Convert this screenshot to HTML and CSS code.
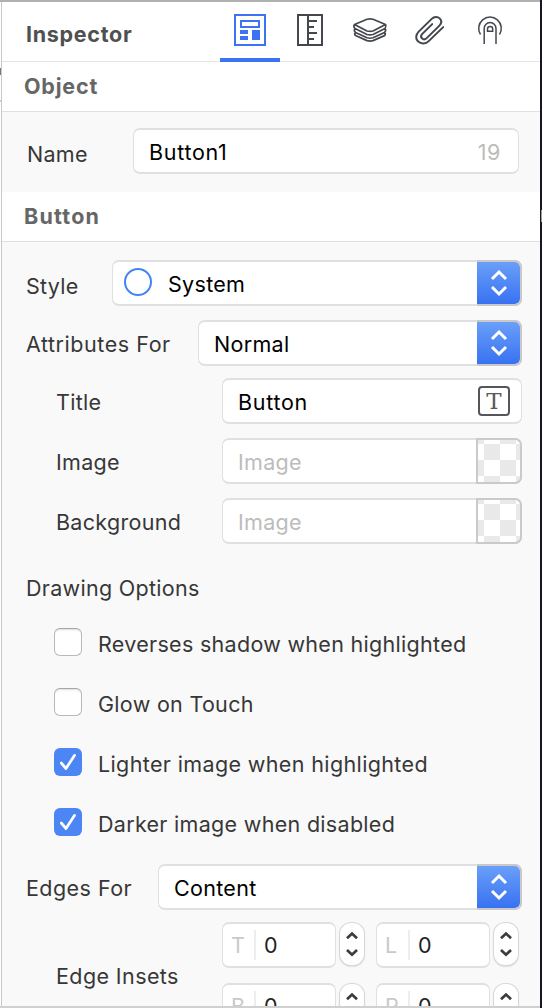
FILE: index.html
```html
<!DOCTYPE html>
<html lang="en">
<head>
<meta charset="utf-8">
<title>Inspector</title>
<link rel="stylesheet" href="styles.css">
</head>
<body>
<svg class="defs" width="0" height="0" aria-hidden="true">
  <symbol id="updown" viewBox="0 0 20 28"><path d="M3 10 10 3l7 7M3 18l7 7 7-7" fill="none" stroke="currentColor" stroke-width="3"/></symbol>
  <symbol id="step" viewBox="0 0 24 42"><path d="M7 15.200l5-4.700 5 4.700M7 27l5 4.700 5-4.700" fill="none" stroke="currentColor" stroke-width="2.700"/></symbol>
  <symbol id="check" viewBox="0 0 28 28"><path d="M7.300 15 12 20.500 20.600 7.300" fill="none" stroke="#fff" stroke-width="2.700" stroke-linecap="round" stroke-linejoin="round"/></symbol>
</svg>
<div class="panel">
  <header class="head">
    <h1 class="title"><span>Inspector</span></h1>
    <nav class="tabs">
      <div class="tab active"><svg width="60" height="60" viewBox="0 0 60 60" fill="none" stroke="#3d73f2" stroke-width="2"><path d="M15 13h30v30H15zM21 19h18v6H21z"/><path fill="#3d73f2" stroke="none" d="M20 28h8v4h-8zM20 34h8v4h-8zM32 28h8v10h-8z"/></svg></div>
      <div class="tab"><svg width="60" height="60" viewBox="0 0 60 60" fill="none" stroke="#45474f" stroke-width="2"><path d="M18 13h24v30H18zM28 13v30M28 19h9M28 25h6M28 31h9M28 37h6"/></svg></div>
      <div class="tab"><svg width="60" height="60" viewBox="0 0 60 60" fill="none" stroke="#45474f" stroke-width="1.700" stroke-linejoin="round"><path d="M14.500 22.500 27 17.200q3-.8 6 0l12.500 5.300-12.500 6.500q-3 .9-6 0zM14.500 22.500q-1.500 2.500.5 4L27 32.500q3 .9 6 0l12-6q1.500-2 .5-4M15 26.500q-1.500 2.500.5 4L27 35.800q3 .9 6 0l11.500-5.300q2-2 .5-4M15.500 30.500q-1.500 1.500 0 3L27 38.600q3 .9 6 0l11.500-5q1.500-1.500 0-3"/></svg></div>
      <div class="tab"><svg width="60" height="60" viewBox="0 0 60 60" fill="none" stroke="#45474f" stroke-width="2" stroke-linecap="round"><path transform="translate(-.8 -.4)" d="M44 25.500 29.500 39.500c-3 3-7.500 3.200-10.500.5s-2.500-7 .5-10L32.500 17.300c2.500-2.500 6-2.500 8-.5s2 5-.5 7.500L27.500 36.500c-1.500 1.500-3.500 1.500-4.700.3s-1.200-3 .3-4.500L33 22.500"/></svg></div>
      <div class="tab"><svg width="60" height="60" viewBox="0 0 60 60" fill="none" stroke="#45474f" stroke-width="1.500"><path d="M20.500 32.500a11.300 11.300 0 1 1 19 0M24.200 42V26.500a5.900 5.900 0 0 1 11.800 0V42"/><path d="M27.500 29.300v-2.300a2.600 2.600 0 0 1 5.200 0v2.300z"/></svg></div>
    </nav>
  </header>
  <h2 class="section"><span class="t-object">Object</span></h2>
  <div class="group object">
    <div class="row name"><label class="w-name">Name</label><div class="field"><span class="wide">Button1</span><span class="count">19</span></div></div>
  </div>
  <h2 class="section"><span class="t-button">Button</span></h2>
  <div class="group button">
    <div class="row gap14"><label class="w-style">Style</label><div class="field select"><i class="ring"></i><span>System</span><b class="arrows"><svg width="20" height="28"><use href="#updown"/></svg></b></div></div>
    <div class="row gap12 up"><label class="w-attr">Attributes For</label><div class="field select"><span>Normal</span><b class="arrows"><svg width="20" height="28"><use href="#updown"/></svg></b></div></div>
    <div class="row gap14 sub up"><label class="w-sub">Title</label><div class="field"><span class="wide">Button</span><b class="tbox">T</b></div></div>
    <div class="row gap14 sub up"><label class="w-sub">Image</label><div class="field muted"><span>Image</span><b class="swatch"></b></div></div>
    <div class="row sub up"><label class="w-sub">Background</label><div class="field muted"><span>Image</span><b class="swatch"></b></div></div>
    <div class="caption"><span>Drawing Options</span></div>
    <div class="option"><i class="box"></i><span>Reverses shadow when highlighted</span></div>
    <div class="option"><i class="box"></i><span>Glow on Touch</span></div>
    <div class="option"><i class="box on"><svg width="28" height="28"><use href="#check"/></svg></i><span class="lighter">Lighter image when highlighted</span></div>
    <div class="option"><i class="box on"><svg width="28" height="28"><use href="#check"/></svg></i><span>Darker image when disabled</span></div>
    <div class="row gap12 edges up"><label class="w-edges">Edges For</label><div class="field select"><span>Content</span><b class="arrows"><svg width="20" height="28"><use href="#updown"/></svg></b></div></div>
    <div class="insets">
      <label class="w-insets">Edge Insets</label>
      <div class="grid">
        <div class="pair"><div class="num"><em>T</em><span>0</span></div><div class="stepper"><svg width="24" height="42"><use href="#step"/></svg></div></div>
        <div class="pair"><div class="num"><em>L</em><span>0</span></div><div class="stepper"><svg width="24" height="42"><use href="#step"/></svg></div></div>
        <div class="pair"><div class="num"><em>B</em><span>0</span></div><div class="stepper"><svg width="24" height="42"><use href="#step"/></svg></div></div>
        <div class="pair"><div class="num"><em>R</em><span>0</span></div><div class="stepper"><svg width="24" height="42"><use href="#step"/></svg></div></div>
      </div>
    </div>
  </div>
</div>
</body>
</html>
```
FILE: styles.css
```css
* { box-sizing: border-box; }
body { margin: 0; width: 542px; height: 1008px; overflow: hidden; background: linear-gradient(#a0a0a6, #a0a0a6) 541px 210px / 1px 12px no-repeat, #16171f; font-family: Inter, "Liberation Sans", sans-serif; font-size: 21.5px; letter-spacing: .3px; color: #373737; }
.defs { position: absolute; }
svg { display: block; }
i, em { font-style: normal; }
b { font-weight: 400; }
.panel { width: 540px; height: 1008px; overflow: hidden; background: linear-gradient(#777, #777) 0 66px / 1px 7px no-repeat, linear-gradient(#ccc, #ccc) 0 98px / 1px 2px no-repeat, linear-gradient(90deg, #fff 1px, #c8c8c8 1px, #c8c8c8 2px, #f9f9f9 2px); border-top: 2px solid #b0b0b0; border-bottom: 2px solid #d0d0d0; padding-left: 2px; display: flex; flex-direction: column; }
.head { height: 60px; flex: none; background: #fff; border-bottom: 1px solid #e4e4e4; display: flex; justify-content: space-between; padding: 0 20px 0 24px; }
.title { margin: 0; font-size: 21.5px; font-weight: 700; letter-spacing: .7px; color: #505050; line-height: 64px; }
.tabs { display: flex; height: 60px; }
.tab { width: 60px; height: 60px; }
.tab.active { border-bottom: 4px solid #3d73f2; }
.section { flex: none; margin: 0; height: 50px; padding-left: 22px; background: #fff; border-bottom: 1px solid #e0e0e0; font-size: 21.5px; font-weight: 700; color: #666; line-height: 49px; }
.t-object { letter-spacing: .8px; }
.t-button { letter-spacing: 1.2px; }
.group { flex: none; padding-left: 24px; }
.object { height: 80px; padding: 16px 21px 0 25px; }
.button { padding: 18px 18px 0 24px; }
.row { display: flex; height: 46px; }
.gap14 { margin-bottom: 14px; }
.gap12 { margin-bottom: 12px; }
.sub { padding-left: 30px; }
label { flex: none; line-height: 52px; white-space: nowrap; }
.up label { line-height: 48px; }
.w-name { width: 106px; }
.w-style { width: 86px; }
.w-attr { width: 172px; letter-spacing: .55px; }
.w-sub { width: 166px; }
.w-edges { width: 132px; letter-spacing: .45px; }
.w-insets { width: 166px; letter-spacing: .4px; }
.field { flex: 1; height: 46px; display: flex; align-items: center; padding-left: 15px; border: solid #e0e0e0; border-width: 2px 1px; border-radius: 7px; background: #fff; color: #000; line-height: 44px; }
.field > span { flex: 1; padding-top: 2px; }
.field > .wide { letter-spacing: .7px; }
.field > .count { flex: none; color: #bbb; margin-right: 17px; letter-spacing: .6px; }
.field.muted { color: #bcbcbc; }
.ring { width: 28px; height: 28px; border: 2px solid #4285f4; border-radius: 50%; margin: 0 16px 2px -4px; }
.arrows { width: 45px; height: 46px; margin: -2px -1px; border: 2px solid #c9c9c9; border-left: 0; border-radius: 0 7px 7px 0; background: linear-gradient(#6a9ff8, #3872f2) padding-box; color: #fff; display: flex; align-items: center; justify-content: center; }
.tbox { width: 32px; height: 30px; border: 2px solid #55565b; border-radius: 4px; margin-right: 11px; color: #5c5856; font: 27px/27px "DejaVu Serif", serif; font-size: 23px; letter-spacing: 0; text-align: center; }
.swatch { width: 46px; height: 46px; margin: -2px -1px; border: 2px solid #cacaca; border-radius: 0 7px 7px 0; background: conic-gradient(#fff 25%, #e9e9e9 0 50%, #fff 0 75%, #e9e9e9 0) 6px 4px / 32px 32px padding-box; }
.caption { height: 84px; line-height: 89px; white-space: nowrap; }
.option { display: flex; height: 60px; padding-left: 28px; }
.option > span { margin-left: 16px; line-height: 33px; white-space: nowrap; }
.option > .lighter { letter-spacing: .37px; }
.box { width: 28px; height: 28px; border-radius: 6px; background: #fff; border: 1px solid #b9b9b9; border-top-color: #a6a6a6; box-shadow: inset 0 2px 2px -1px #ddd; }
.box.on { background: #4c86f5; border: 0; box-shadow: none; }
.edges { margin-top: -4px; }
.insets { display: flex; padding-left: 30px; }
.insets > label { line-height: 108px; }
.grid { display: grid; grid-template-columns: 142px 142px; column-gap: 12px; row-gap: 14px; }
.pair { display: flex; gap: 4px; }
.num { width: 114px; height: 46px; border: solid #e0e0e0; border-width: 2px 1px; border-radius: 7px; background: #fff; display: flex; align-items: center; color: #222; }
.num em { width: 33px; height: 30px; border-right: 2px solid #eee; color: #c9c9c9; padding-left: 8px; line-height: 31px; }
.num span { margin-left: 8px; line-height: 31px; }
.stepper { height: 42px; margin-top: 1px; border-radius: 11px; background: #fff; color: #3b3b3b; box-shadow: 0 0 0 1px #d8d8d8, 0 1px 2px #aaa; }
```
